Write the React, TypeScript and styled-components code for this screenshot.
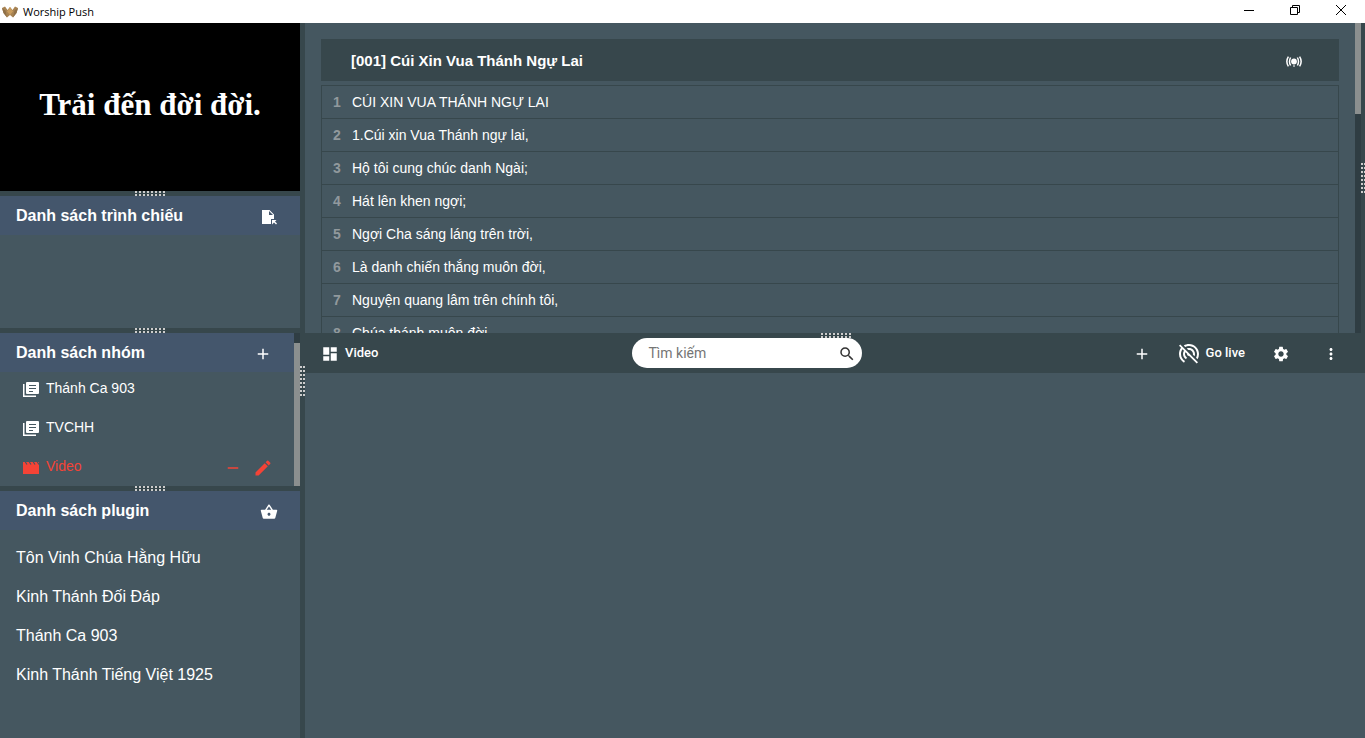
import React from 'react';
import styled, { createGlobalStyle } from 'styled-components';
import {
  MdAdd, MdDashboard, MdEdit, MdMoreVert,
  MdPortableWifiOff, MdRemove, MdSearch, MdSettings, MdShoppingBasket,
} from 'react-icons/md';

const sans = '"Liberation Sans", Arial, sans-serif';
const roboto = 'Roboto, "Liberation Sans", sans-serif';
const panel = '#455760';
const dark = '#37474c';
const heading = '#44566c';
const accent = '#f44336';

const GlobalStyle = createGlobalStyle`
  * { box-sizing: border-box; }
  body { margin: 0; background: ${dark}; color: #fff; font-family: ${sans}; }
  button { font: inherit; }
  h2, ul, ol { margin: 0; padding: 0; list-style: none; }
`;

const Window = styled.div`
  display: flex;
  flex-direction: column;
  height: 100vh;
  overflow: hidden;
`;

const TitleBar = styled.header`
  display: flex;
  align-items: center;
  flex: none;
  height: 23px;
  padding-left: 2px;
  gap: 5px;
  background: #fff;
  color: #000;
  font: 11px/22px "Open Sans", "Noto Sans", sans-serif;
`;

const WindowButtons = styled.div`
  display: flex;
  align-self: stretch;
  margin-left: auto;
  padding-right: 1px;
`;

const WindowButton = styled.button`
  display: flex;
  justify-content: center;
  align-items: center;
  width: 46px;
  height: 20px;
  padding: 0;
  border: 0;
  background: none;
`;

const Body = styled.div`
  display: flex;
  flex: 1;
  min-height: 0;
`;

const Sidebar = styled.aside`
  display: flex;
  flex-direction: column;
  flex: none;
  width: 300px;
`;

const Main = styled.main`
  display: flex;
  flex-direction: column;
  flex: 1;
  min-width: 0;
`;

const Gutter = styled.div<{ $vertical?: boolean }>`
  display: flex;
  flex: none;
  align-items: center;
  justify-content: center;
  width: ${p => (p.$vertical ? '5px' : 'auto')};
  height: ${p => (p.$vertical ? 'auto' : '5px')};
  overflow: hidden;
  background: ${dark};
`;

const Grip = styled.span<{ $vertical?: boolean }>`
  flex: none;
  width: ${p => (p.$vertical ? '5px' : '30px')};
  height: ${p => (p.$vertical ? '30px' : '5px')};
  background-image:
    linear-gradient(${p => (p.$vertical ? '180deg' : '90deg')}, #ccc 2px, transparent 2px),
    linear-gradient(${p => (p.$vertical ? '180deg' : '90deg')}, #ccc 2px, transparent 2px);
  background-size: ${p => (p.$vertical ? '2px 4px' : '4px 2px')};
  background-repeat: ${p => (p.$vertical ? 'repeat-y' : 'repeat-x')};
  background-position: 0 0, ${p => (p.$vertical ? '3px 0' : '0 3px')};
`;

const Preview = styled.section`
  display: flex;
  flex: none;
  align-items: center;
  justify-content: center;
  height: 168px;
  padding-bottom: 4px;
  background: #000;
  font: bold 31px/36px "Liberation Serif", "Times New Roman", serif;
`;

const Panel = styled.section<{ $height?: number }>`
  display: flex;
  flex: ${p => (p.$height ? 'none' : '1')};
  height: ${p => (p.$height ? `${p.$height}px` : 'auto')};
  min-height: 0;
  background: ${panel};
`;

const PanelContent = styled.div`
  flex: 1;
  min-width: 0;
`;

const PanelHeader = styled.div`
  display: flex;
  align-items: center;
  justify-content: space-between;
  height: 39px;
  padding: 0 20px 0 16px;
  background: ${heading};
`;

const PanelTitle = styled.h2`
  font-size: 16px;
  line-height: 20px;
`;

const IconButton = styled.button`
  display: flex;
  align-items: center;
  justify-content: center;
  width: 22px;
  height: 22px;
  margin-top: 2px;
  padding: 0;
  border: 0;
  background: none;
  color: inherit;
`;

const GroupItem = styled.li<{ $active?: boolean }>`
  display: flex;
  align-items: center;
  height: 39px;
  padding: 0 20px 8px 22px;
  gap: 6px;
  font-size: 14px;
  line-height: 16px;
  color: ${p => (p.$active ? accent : '#fff')};

  > svg { margin-top: 4px; }
`;

const GroupActions = styled.span`
  display: flex;
  margin: 2px 0 0 auto;
  gap: 8px;
`;

const PluginList = styled.ul`
  padding-top: 8px;
`;

const PluginItem = styled.li`
  padding: 0 16px;
  font-size: 16px;
  line-height: 39px;
`;

const ScrollTrack = styled.div`
  display: flow-root;
  flex: none;
  width: 6px;
  background: #2f3d43;
`;

const ScrollThumb = styled.div<{ $offset: number; $length: number }>`
  height: ${p => p.$length}px;
  margin-top: ${p => p.$offset}px;
  background: #8b8f8f;
`;

const SongPane = styled.section`
  display: flex;
  flex: none;
  height: 310px;
  overflow: hidden;
  background: ${panel};
`;

const Song = styled.article`
  flex: 1;
  min-width: 0;
  padding: 16px;
`;

const SongHeader = styled.div`
  display: flex;
  align-items: center;
  justify-content: space-between;
  height: 42px;
  margin-bottom: 4px;
  padding: 2px 34px 0 30px;
  background: ${dark};
`;

const SongTitle = styled.h2`
  font-size: 15px;
  line-height: 20px;
`;

const Lyrics = styled.ol`
  border: 1px solid ${dark};
`;

const Line = styled.li`
  display: flex;
  height: 33px;
  padding-left: 11px;
  border-bottom: 1px solid ${dark};
  font-size: 14px;
  line-height: 32px;
  white-space: nowrap;
`;

const LineNumber = styled.span`
  width: 19px;
  font-weight: bold;
  color: #91999d;
`;

const EdgeGutter = styled(Gutter)`
  width: 4px;
  justify-content: flex-start;
`;

const Toolbar = styled.nav`
  position: relative;
  display: flex;
  align-items: center;
  justify-content: space-between;
  flex: none;
  height: 40px;
  padding: 0 25px 0 16px;
  background: ${dark};
  font: 500 13px/18px ${roboto};
`;

const ToolbarGrip = styled(Grip)`
  position: absolute;
  top: 0;
  left: calc(50% - 14px);
`;

const SectionName = styled.div`
  display: flex;
  align-items: center;
  gap: 6px;

  > svg { margin-top: 2px; }
`;

const SearchBox = styled.label`
  display: flex;
  align-items: center;
  width: 230px;
  height: 30px;
  padding: 0 6px 0 16px;
  border-radius: 15px;
  background: #fff;
  color: #333;

  > svg { margin-top: 2px; }
`;

const SearchInput = styled.input`
  flex: 1;
  min-width: 0;
  padding: 0;
  border: 0;
  outline: 0;
  background: none;
  font: 14px/20px ${roboto};

  &::placeholder { color: #757575; opacity: 1; }
`;

const ToolbarActions = styled.div`
  display: flex;
  align-items: center;
  justify-content: flex-end;
  padding-left: 16px;
`;

const ToolButton = styled.button<{ $gap?: number }>`
  display: flex;
  align-items: center;
  gap: 5px;
  height: 26px;
  margin-left: ${p => p.$gap ?? 0}px;
  padding: 0;
  border: 0;
  background: none;
  color: inherit;

  > svg { margin-top: 2px; }
`;

const Stage = styled.section`
  flex: 1;
  background: ${panel};
`;

const lyrics = [
  'CÚI XIN VUA THÁNH NGỰ LAI',
  '1.Cúi xin Vua Thánh ngự lai,',
  'Hộ tôi cung chúc danh Ngài;',
  'Hát lên khen ngợi;',
  'Ngợi Cha sáng láng trên trời,',
  'Là danh chiến thắng muôn đời,',
  'Nguyện quang lâm trên chính tôi,',
  'Chúa thánh muôn đời.',
];

const plugins = ['Tôn Vinh Chúa Hằng Hữu', 'Kinh Thánh Đối Đáp', 'Thánh Ca 903', 'Kinh Thánh Tiếng Việt 1925'];

const Logo = () => (
  <svg width="16" height="14" viewBox="0 0 16 14" aria-hidden="true">
    <path d="M0 3 3 1.500 5.500 5 8 2 10.500 5 13 1.500 16 3 14.500 8 11 12.500 8 10 5 12.500 1.500 8Z" fill="#a88352" />
    <path d="M8 2 11 6.500 8 10 5 6.500Z" fill="#c99c5d" />
    <path d="M0 3 3.500 5.500 5 12.500 1.500 8ZM16 3 12.500 5.500 11 12.500 14.500 8Z" fill="#8f7048" />
  </svg>
);

const FileMoveIcon = () => (
  <svg width="18" height="18" viewBox="0 0 18 18" fill="currentColor" aria-hidden="true">
    <path d="M2 2H9.500L14 6.500V11H11V16H2Z" />
    <path d="M9 3V7H13Z" fill={heading} />
    <path d="M12 12H16.500L15 13.500 17 15.500 16 16.500 14 14.500 12 16.500Z" />
  </svg>
);

const LibraryIcon = () => (
  <svg width="18" height="18" viewBox="0 0 18 18" fill="none" aria-hidden="true">
    <path d="M1.750 3V15.250H14" stroke="currentColor" strokeWidth="1.500" />
    <rect x="4" y="1" width="13" height="12" rx="1" fill="currentColor" />
    <path d="M7 4.500H14M7 7.500H14M7 10.500H11" stroke={panel} />
  </svg>
);

const MovieIcon = () => (
  <svg width="18" height="18" viewBox="0 0 18 18" aria-hidden="true">
    <path d="M1 3H17V15H1Z" fill="currentColor" />
    <path d="M3 2.500 5 5.500M7 2.500 9 5.500M11 2.500 13 5.500M15 2.500 17 5.500" stroke={panel} strokeWidth="1.200" />
  </svg>
);

const BroadcastIcon = () => (
  <svg width="16" height="12" viewBox="0 0 16 12" fill="none" stroke="currentColor" strokeWidth="1.500" aria-hidden="true">
    <circle cx="8" cy="5.500" r="2.900" fill="currentColor" stroke="none" />
    <path d="M7 10H9" strokeWidth="1" />
    <path d="M4.600 1.500Q2.400 5.500 4.600 9.500M11.400 1.500Q13.600 5.500 11.400 9.500M2.400 .7Q-.7 5.500 2.400 10.300M13.600 .7Q16.700 5.500 13.600 10.300" />
  </svg>
);

export default function App() {
  return (
    <Window>
      <GlobalStyle />
      <TitleBar>
        <Logo />
        <span>Worship Push</span>
        <WindowButtons>
          <WindowButton aria-label="Minimize">
            <svg width="10" height="10"><path d="M0 5.500H10" stroke="#000" /></svg>
          </WindowButton>
          <WindowButton aria-label="Restore">
            <svg width="10" height="10" fill="none" stroke="#000"><path d="M.5 2.500H7.500V9.500H.5ZM2.500 2.500V.5H9.500V7.500H7.500" /></svg>
          </WindowButton>
          <WindowButton aria-label="Close">
            <svg width="10" height="10" stroke="#000"><path d="M0 0 10 10M10 0 0 10" /></svg>
          </WindowButton>
        </WindowButtons>
      </TitleBar>
      <Body>
        <Sidebar>
          <Preview>Trải đến đời đời.</Preview>
          <Gutter><Grip /></Gutter>
          <Panel $height={132}>
            <PanelContent>
              <PanelHeader>
                <PanelTitle>Danh sách trình chiếu</PanelTitle>
                <IconButton aria-label="Mở tệp"><FileMoveIcon /></IconButton>
              </PanelHeader>
            </PanelContent>
          </Panel>
          <Gutter><Grip /></Gutter>
          <Panel $height={153}>
            <PanelContent>
              <PanelHeader>
                <PanelTitle>Danh sách nhóm</PanelTitle>
                <IconButton aria-label="Thêm nhóm"><MdAdd size={18} /></IconButton>
              </PanelHeader>
              <ul>
                <GroupItem><LibraryIcon />Thánh Ca 903</GroupItem>
                <GroupItem><LibraryIcon />TVCHH</GroupItem>
                <GroupItem $active>
                  <MovieIcon />Video
                  <GroupActions>
                    <IconButton aria-label="Xóa"><MdRemove size={18} /></IconButton>
                    <IconButton aria-label="Sửa"><MdEdit size={20} /></IconButton>
                  </GroupActions>
                </GroupItem>
              </ul>
            </PanelContent>
            <ScrollTrack><ScrollThumb $offset={10} $length={143} /></ScrollTrack>
          </Panel>
          <Gutter><Grip /></Gutter>
          <Panel>
            <PanelContent>
              <PanelHeader>
                <PanelTitle>Danh sách plugin</PanelTitle>
                <IconButton aria-label="Kho plugin"><MdShoppingBasket size={18} /></IconButton>
              </PanelHeader>
              <PluginList>
                {plugins.map(name => <PluginItem key={name}>{name}</PluginItem>)}
              </PluginList>
            </PanelContent>
          </Panel>
        </Sidebar>
        <Gutter $vertical><Grip $vertical /></Gutter>
        <Main>
          <SongPane>
            <Song>
              <SongHeader>
                <SongTitle>[001] Cúi Xin Vua Thánh Ngự Lai</SongTitle>
                <IconButton aria-label="Phát"><BroadcastIcon /></IconButton>
              </SongHeader>
              <Lyrics>
                {lyrics.map((text, i) => (
                  <Line key={text}><LineNumber>{i + 1}</LineNumber>{text}</Line>
                ))}
              </Lyrics>
            </Song>
            <ScrollTrack><ScrollThumb $offset={0} $length={91} /></ScrollTrack>
            <EdgeGutter $vertical><Grip $vertical /></EdgeGutter>
          </SongPane>
          <Toolbar>
            <SectionName><MdDashboard size={18} />Video</SectionName>
            <SearchBox>
              <SearchInput type="text" placeholder="Tìm kiếm" aria-label="Tìm kiếm" />
              <MdSearch size={18} />
            </SearchBox>
            <ToolbarActions>
              <ToolButton aria-label="Thêm"><MdAdd size={18} /></ToolButton>
              <ToolButton $gap={26}><MdPortableWifiOff size={24} />Go live</ToolButton>
              <ToolButton $gap={27} aria-label="Cài đặt"><MdSettings size={18} /></ToolButton>
              <ToolButton $gap={32} aria-label="Thêm tùy chọn"><MdMoreVert size={18} /></ToolButton>
            </ToolbarActions>
            <ToolbarGrip />
          </Toolbar>
          <Stage />
        </Main>
      </Body>
    </Window>
  );
}
